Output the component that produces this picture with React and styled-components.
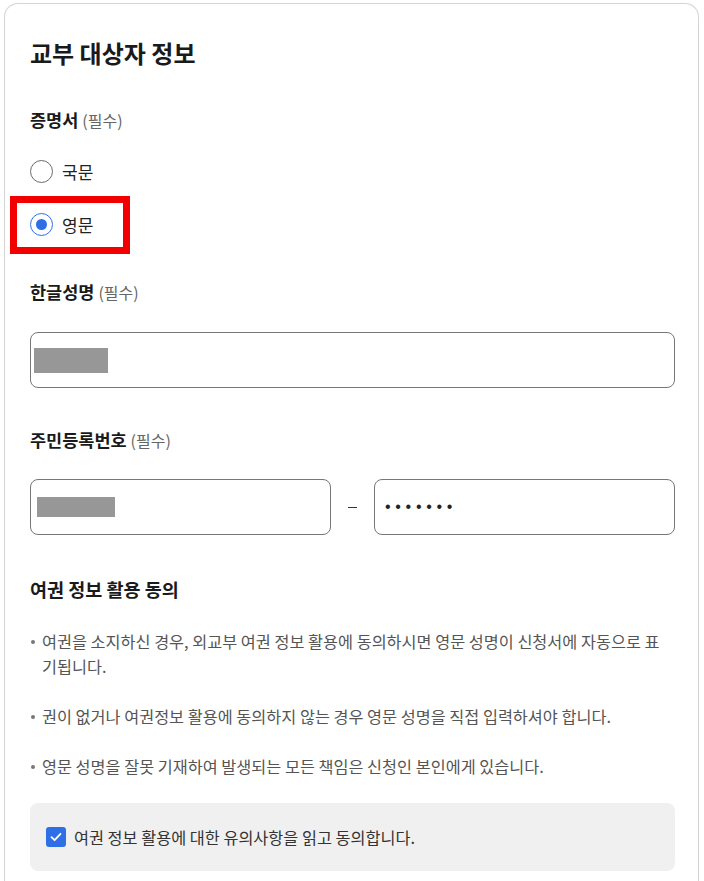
import React from "react";
import styled, { createGlobalStyle } from "styled-components";

const COLORS = {
  text: "#1a1a1a",
  body: "#555555",
  muted: "#666666",
  border: "#d4d4d4",
  field: "#777777",
  blue: "#2f6fe6",
  redact: "#979797",
  panel: "#f0f0f0",
  highlight: "#f20000",
};

const GlobalStyle = createGlobalStyle`
  html, body {
    margin: 0;
    padding: 0;
    background: #ffffff;
  }
  body {
    font-family: "Noto Sans CJK KR", "Noto Sans", sans-serif;
    color: ${COLORS.text};
  }
`;

const Card = styled.section`
  margin: 3px 5px 0 4px;
  min-height: 900px;
  border: 1px solid ${COLORS.border};
  border-bottom: none;
  border-radius: 14px 14px 0 0;
  padding: 34px 23px 0 25px;
  box-sizing: border-box;
`;

const Title = styled.h1`
  margin: 0;
  font-size: 24px;
  line-height: 30px;
  font-weight: 700;
`;

const Label = styled.div`
  margin-top: ${(p) => p.$gap}px;
  font-size: 17.5px;
  line-height: 24px;
  font-weight: 700;
`;

const Required = styled.span`
  margin-left: 4px;
  font-size: 16px;
  font-weight: 400;
  color: ${COLORS.muted};
`;

const RadioGroup = styled.div`
  margin-top: 27px;
  display: flex;
  flex-direction: column;
  gap: 29px;
`;

const RadioRow = styled.label`
  position: relative;
  display: flex;
  align-items: center;
  gap: 9px;
  height: 24px;
  font-size: 17px;
  color: #222;
`;

const RadioCircle = styled.span`
  width: 23px;
  height: 23px;
  border-radius: 50%;
  box-sizing: border-box;
  border: 1px solid ${(p) => (p.$checked ? COLORS.blue : "#6a6a6a")};
  display: flex;
  align-items: center;
  justify-content: center;

  &::after {
    content: "";
    display: ${(p) => (p.$checked ? "block" : "none")};
    width: 11px;
    height: 11px;
    border-radius: 50%;
    background: ${COLORS.blue};
  }
`;

const Highlight = styled.span`
  position: absolute;
  left: -20px;
  top: -16px;
  width: 120px;
  height: 58px;
  box-sizing: border-box;
  border: 7px solid ${COLORS.highlight};
  pointer-events: none;
`;

const Field = styled.div`
  margin-top: 28px;
  height: 56px;
  box-sizing: border-box;
  border: 1px solid ${COLORS.field};
  border-radius: 8px;
  display: flex;
  align-items: center;
  padding-left: 3px;
  flex: 1 1 0;
  min-width: 0;
`;

const FieldRow = styled.div`
  margin-top: 27px;
  display: flex;
  align-items: center;

  ${Field} {
    margin-top: 0;
  }
`;

const Dash = styled.span`
  width: 43px;
  flex: none;
  display: flex;
  justify-content: center;

  &::before {
    content: "";
    width: 9px;
    height: 1px;
    background: #333;
  }
`;

const Redacted = styled.span`
  display: block;
  margin-left: ${(p) => p.$offset || 0}px;
  width: ${(p) => p.$w}px;
  height: ${(p) => p.$h}px;
  background: ${COLORS.redact};
`;

const Dots = styled.span`
  margin-left: 7px;
  font-family: "Liberation Sans", sans-serif;
  font-size: 16px;
  letter-spacing: 4.7px;
  color: #222;
`;

const SectionTitle = styled.h2`
  margin: 41px 0 0;
  font-size: 18.5px;
  line-height: 26px;
  font-weight: 700;
`;

const NoticeList = styled.ul`
  margin: 27px 0 0;
  padding: 0;
  list-style: none;
  display: flex;
  flex-direction: column;
  gap: 25px;
`;

const NoticeItem = styled.li`
  position: relative;
  padding: 0 10px 0 12px;
  font-size: 16.3px;
  line-height: 25px;
  color: ${COLORS.body};

  &::before {
    content: "";
    position: absolute;
    left: 1px;
    top: 11px;
    width: 4px;
    height: 4px;
    border-radius: 50%;
    background: #777;
  }
`;

const AgreeBox = styled.label`
  margin-top: 24px;
  height: 68px;
  border-radius: 8px;
  background: ${COLORS.panel};
  display: flex;
  align-items: center;
  gap: 8px;
  padding-left: 16px;
  font-size: 16.3px;
  color: #333;
`;

const CheckBox = styled.span`
  width: 20px;
  height: 20px;
  border-radius: 3px;
  background: ${COLORS.blue};
  display: flex;
  align-items: center;
  justify-content: center;
`;

const notices = [
  "여권을 소지하신 경우, 외교부 여권 정보 활용에 동의하시면 영문 성명이 신청서에 자동으로 표기됩니다.",
  "권이 없거나 여권정보 활용에 동의하지 않는 경우 영문 성명을 직접 입력하셔야 합니다.",
  "영문 성명을 잘못 기재하여 발생되는 모든 책임은 신청인 본인에게 있습니다.",
];

export default function App() {
  return (
    <>
      <GlobalStyle />
      <Card>
        <Title>교부 대상자 정보</Title>

        <Label $gap={40}>
          증명서<Required>(필수)</Required>
        </Label>
        <RadioGroup>
          <RadioRow>
            <RadioCircle />
            국문
          </RadioRow>
          <RadioRow>
            <RadioCircle $checked />
            영문
            <Highlight />
          </RadioRow>
        </RadioGroup>

        <Label $gap={44}>
          한글성명<Required>(필수)</Required>
        </Label>
        <Field>
          <Redacted $w={74} $h={25} />
        </Field>

        <Label $gap={40}>
          주민등록번호<Required>(필수)</Required>
        </Label>
        <FieldRow>
          <Field>
            <Redacted $offset={3} $w={78} $h={20} />
          </Field>
          <Dash />
          <Field>
            <Dots>•••••••</Dots>
          </Field>
        </FieldRow>

        <SectionTitle>여권 정보 활용 동의</SectionTitle>
        <NoticeList>
          {notices.map((text) => (
            <NoticeItem key={text}>{text}</NoticeItem>
          ))}
        </NoticeList>

        <AgreeBox>
          <CheckBox>
            <svg width="14" height="14" viewBox="0 0 14 14" fill="none">
              <path
                d="M2.5 7.2 L5.6 10.2 L11.5 3.8"
                stroke="#fff"
                strokeWidth="1.8"
                strokeLinecap="round"
                strokeLinejoin="round"
              />
            </svg>
          </CheckBox>
          여권 정보 활용에 대한 유의사항을 읽고 동의합니다.
        </AgreeBox>
      </Card>
    </>
  );
}
